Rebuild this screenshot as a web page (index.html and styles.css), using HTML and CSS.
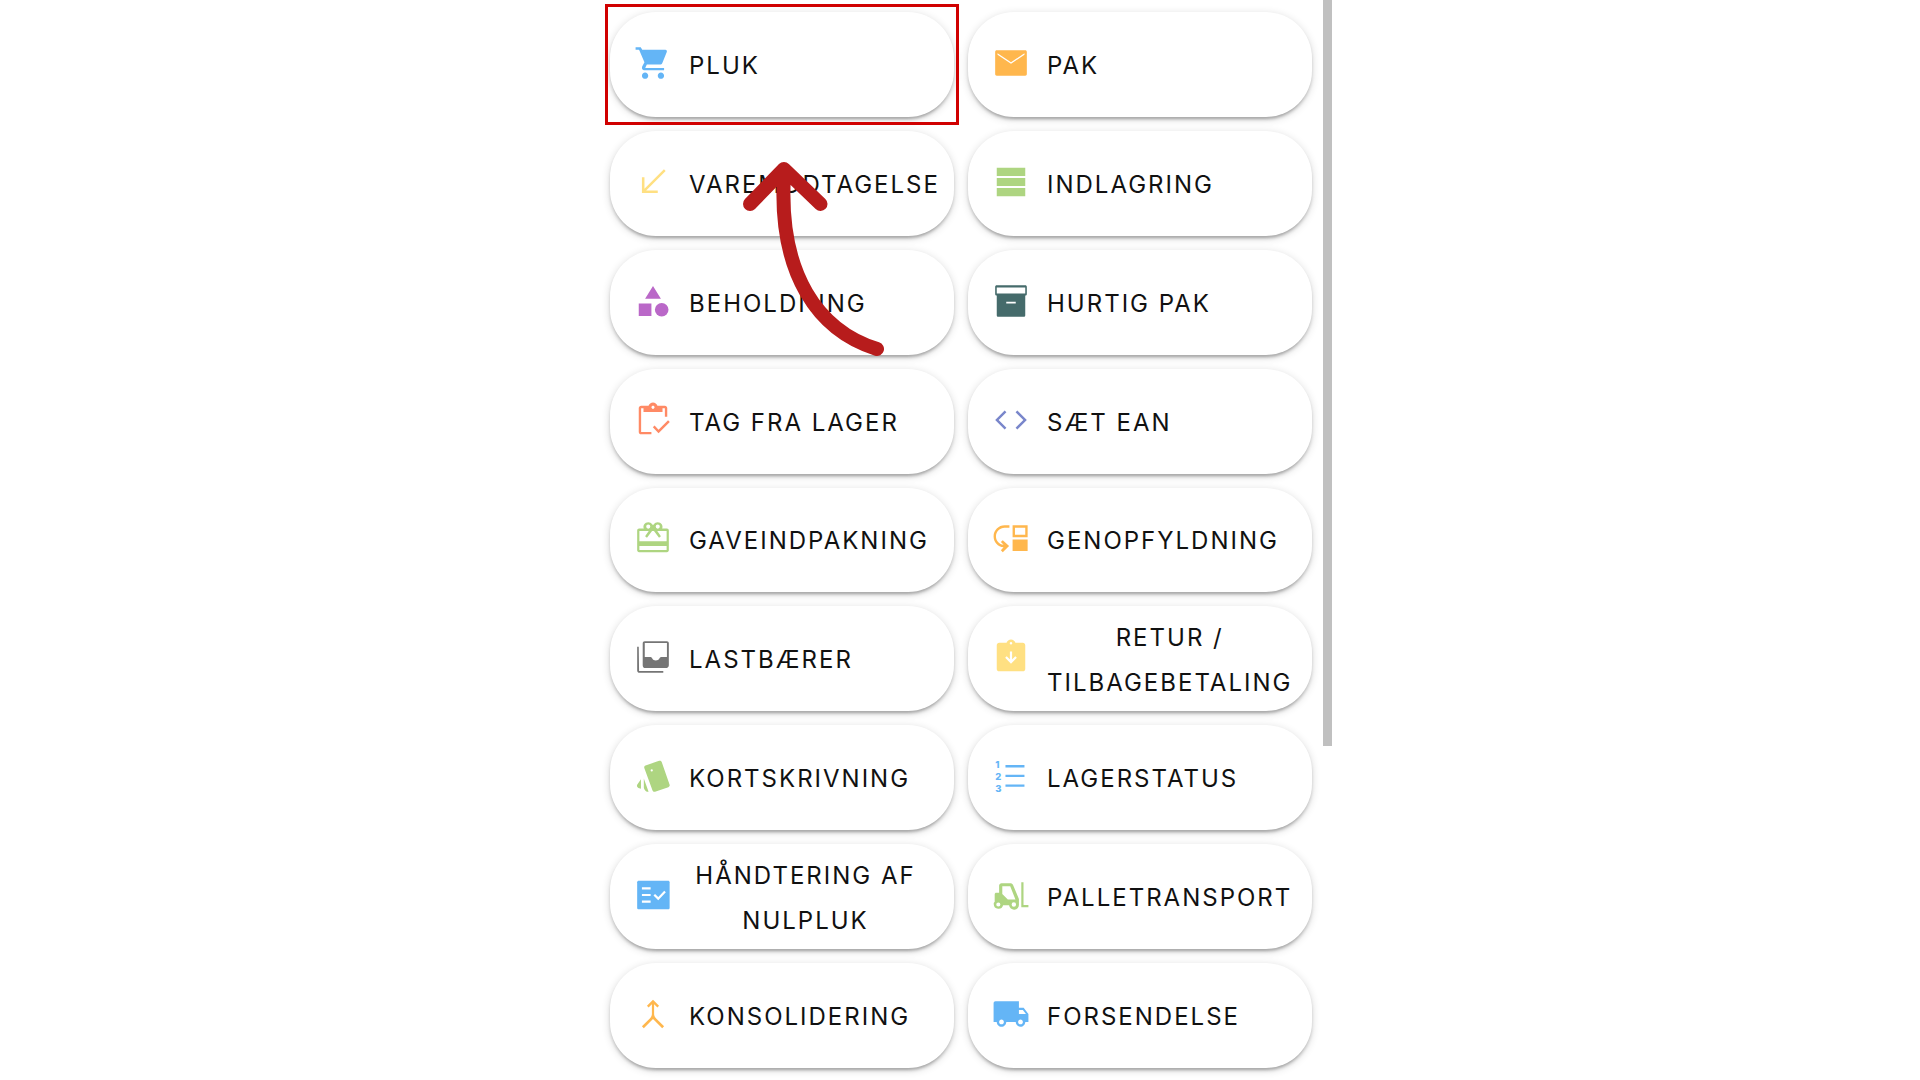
FILE: index.html
```
<!DOCTYPE html>
<html lang="da">
  <head>
    <meta charset="UTF-8" />
    <meta name="viewport" content="width=device-width, initial-scale=1.0" />
    <title>Lager</title>
    <link rel="stylesheet" href="styles.css">
  </head>
  <body>
    <div class="panel">
      <main class="menu">
        <button class="tile highlighted">
          <svg class="icon blue" viewBox="0 0 24 24"><path d="M7 18c-1.1 0-1.99.9-1.99 2S5.9 22 7 22s2-.9 2-2-.9-2-2-2zM1 2v1.600h2.200l3.400 7.990-1.350 2.450c-.16.28-.25.61-.25.96 0 1.100.9 1.600 2 1.600h12v-1.400H7.420c-.14 0-.25-.11-.25-.25l.03-.12.9-1.830h8.300c.75 0 1.200-.41 1.500-1.030l2.800-6.890c.3-.8-.1-1.480-.9-1.480H5.210l-.94-1.600H1zm16 16c-1.100 0-1.990.9-1.990 2s.89 2 1.990 2 2-.9 2-2-.9-2-2-2z"/></svg>
          <span>PLUK</span>
        </button>
        <button class="tile">
          <svg class="icon orange" viewBox="0 0 24 24"><path d="M21 4H3c-.6 0-1 .4-1 1v14c0 .6.4 1 1 1h18c.6 0 1-.4 1-1V5c0-.6-.4-1-1-1zm-.5 2.800L12 12.500 3.500 6.800V5.900L12 11.500l8.500-5.600z"/></svg>
          <span>PAK</span>
        </button>

        <button class="tile">
          <svg class="icon yellow" viewBox="0 0 24 24"><path d="M15 19v-1.600H7.700L20 5.100 18.900 4 6.600 16.300V9H5v10z"/></svg>
          <span>VAREMODTAGELSE</span>
        </button>
        <button class="tile">
          <svg class="icon green" viewBox="0 0 24 24"><path d="M3 3h18v5.200H3zM3 9.400h18v5.200H3zM3 15.800h18V21H3z"/></svg>
          <span>INDLAGRING</span>
        </button>

        <button class="tile">
          <svg class="icon purple" viewBox="0 0 24 24"><path d="M12 2.500l-5 8h10zM3 13.500h8v8H3z"/><circle cx="17.500" cy="17.500" r="4.300"/></svg>
          <span>BEHOLDNING</span>
        </button>
        <button class="tile">
          <svg class="icon teal" viewBox="0 0 24 24"><path fill-rule="evenodd" d="M3 2h18c.6 0 1 .4 1 1v4.500c0 .6-.4 1-1 1V21c0 .6-.4 1-1 1H4c-.6 0-1-.4-1-1V8.500c-.6 0-1-.4-1-1V3c0-.6.4-1 1-1zm0 1.400v3.800h18V3.400zm6 9v1.200h6v-1.200z"/></svg>
          <span>HURTIG PAK</span>
        </button>

        <button class="tile">
          <svg class="icon red" viewBox="0 0 24 24"><path d="M4.500 4.500H6V7h12V4.500h1.500V10H21V4.500c0-.8-.7-1.500-1.500-1.500h-4.700C14.400 1.840 13.300 1 12 1s-2.400.84-2.820 2H4.500C3.700 3 3 3.700 3 4.500v15c0 .8.7 1.500 1.500 1.500H11v-1.400H4.500zM12 3c.55 0 1 .45 1 1s-.45 1-1 1-1-.45-1-1 .45-1 1-1z"/><path d="M21.500 12.200L15.500 18.100l-2.500-2.600-1.100 1.100 3.600 3.700 7.100-7z"/></svg>
          <span>TAG FRA LAGER</span>
        </button>
        <button class="tile">
          <svg class="icon indigo" viewBox="0 0 24 24"><path d="M9.100 16.900L4.200 12l4.900-4.900L8 6l-6 6 6 6zm5.800 0l4.900-4.900-4.900-4.900L16 6l6 6-6 6z"/></svg>
          <span>SÆT EAN</span>
        </button>

        <button class="tile">
          <svg class="icon green" viewBox="0 0 24 24"><path fill-rule="evenodd" d="M20.800 6h-3c.8-2-.6-4-2.800-4-1.050 0-1.960.54-2.500 1.350l-.5.67-.5-.68C10.960 2.540 10.050 2 9 2 6.800 2 5.400 4 6.200 6h-3C2.500 6 2 6.500 2 7.200v12.600C2 20.500 2.500 21 3.200 21h17.600c.7 0 1.200-.5 1.200-1.200V7.200c0-.7-.5-1.200-1.200-1.200zM15 3.500a1.300 1.300 0 1 1 0 2.600 1.300 1.300 0 0 1 0-2.600zM9 3.500a1.300 1.300 0 1 1 0 2.600 1.300 1.300 0 0 1 0-2.600zM20.600 19.600H3.400V17h17.200zm0-5.600H3.400V7.500h5.900L7 10.830l1.200 1L11.400 7.500h1.200l3.200 4.330 1.200-1L14.700 7.500h5.900z"/></svg>
          <span>GAVEINDPAKNING</span>
        </button>
        <button class="tile">
          <svg class="icon orange" viewBox="0 0 24 24"><path d="M2.500 11c0 2.700 1.960 4.900 4.800 5.300l-1.700-1.800L6.800 13.400l4 3.700L6.800 21l-1.200-1.200 1.700-1.900C3.700 17.540 1 14.580 1 11c0-3.870 3.130-7 7-7h3v1.500H8c-3 0-5.500 2.500-5.500 5.500z"/><path d="M22.500 11.500V4h-9.500v7.500h9.500zM21 10h-6.500V5.500H21V10zM13 13h9.500v7.200H13z"/></svg>
          <span>GENOPFYLDNING</span>
        </button>

        <button class="tile">
          <svg class="icon gray" viewBox="0 0 24 24"><path d="M3 5.500H2V20.500c0 .8.7 1.500 1.500 1.500H18.500v-1.200H3.200z"/><path fill-rule="evenodd" d="M6.800 2h14c.7 0 1.200.5 1.200 1.200v14c0 1.100-.9 1.800-1.800 1.800H7.200c-1 0-1.700-.7-1.700-1.700v-14C5.500 2.500 6 2 6.800 2zM6.800 3.200V12h3.700c1 0 1 2.200 3.300 2.200s2.300-2.200 3.300-2.200H20.800V3.200z"/></svg>
          <span>LASTBÆRER</span>
        </button>
        <button class="tile">
          <svg class="icon yellow" viewBox="0 0 24 24"><path d="M19.500 3h-4.700C14.400 1.840 13.300 1 12 1c-1.300 0-2.400.84-2.820 2H4.500C3.700 3 3 3.700 3 4.500v15c0 .8.7 1.500 1.500 1.500h15c.8 0 1.500-.7 1.500-1.500v-15c0-.8-.7-1.500-1.500-1.500zM12 2.500c.4 0 .8.4.8.8s-.4.8-.8.8-.8-.4-.8-.8.4-.8.8-.8z"/><path class="mark" d="M12 8.500v6.500M8.800 12l3.200 3.200 3.200-3.200"/></svg>
          <span>RETUR / TILBAGEBETALING</span>
        </button>

        <button class="tile">
          <svg class="icon green" viewBox="0 0 24 24"><path fill-rule="evenodd" d="M7.300 5.300l8.600-2.900c.7-.2 1.300.1 1.600.8l5 14.300c.2.700-.1 1.300-.8 1.600l-8.400 2.800c-.7.200-1.300-.1-1.600-.8L6.500 6.900c-.2-.7.100-1.300.8-1.600zM11.200 7.800a.7.7 0 1 0 0 1.400.7.7 0 0 0 0-1.400z"/><path d="M6.200 13.500l3 8.500c-1.600.2-3-1.300-3-3zM4.400 14v6l-1.600-.5c-.8-.4-1.200-1.200-.8-2z"/></svg>
          <span>KORTSKRIVNING</span>
        </button>
        <button class="tile">
          <svg class="icon blue" viewBox="0 0 24 24"><path d="M8.500 5h12v1.700h-12zM8.500 11.200h12v1.500h-12zM8.500 17.300h12v1.500h-12z"/><text class="digit" x="2" y="7">1</text><text class="digit" x="2" y="14.500">2</text><text class="digit" x="2" y="22">3</text></svg>
          <span>LAGERSTATUS</span>
        </button>

        <button class="tile">
          <svg class="icon blue" viewBox="0 0 24 24"><path d="M21.500 3h-18.500c-.6 0-1 .4-1 1v16c0 .6.4 1 1 1h18.500c.6 0 1-.4 1-1V4c0-.6-.4-1-1-1z"/><path class="mark" d="M5 7.800h5.500M5 12h5.500M5 16.200h5.500M12.800 11.800l2.500 2.500 4.300-4.500"/></svg>
          <span>HÅNDTERING AF NULPLUK</span>
        </button>
        <button class="tile">
          <svg class="icon green" viewBox="0 0 24 24"><path fill-rule="evenodd" d="M6 4.500h5.500c.8 0 1.500.4 1.800 1.200L17 14.500v3.400a3 3 0 0 1-6.200.6H7a3 3 0 0 1-5.900-.6V17l.6-.8V11.500c0-.6.4-1 1-1h1.800V6c0-.8.7-1.500 1.500-1.500zm.5 1.900v5l3.500 3.400h4.800L11.500 6.400zM4 16.700a1.300 1.300 0 1 0 0 2.600 1.300 1.300 0 0 0 0-2.600zM13.800 16.600a1.400 1.400 0 1 0 0 2.800 1.400 1.400 0 0 0 0-2.800z"/><path d="M18.500 4h1.400v14.300H23v1.500h-4.500z"/></svg>
          <span>PALLETRANSPORT</span>
        </button>

        <button class="tile">
          <svg class="icon orange" viewBox="0 0 24 24"><path d="M6.200 21L5 19.800l5-4.900c.8-.8 1.300-1.770 1.300-2.830V5.800L9.200 7.900 8.200 6.800 12 3l3.800 3.800-1 1.100-2.100-2.100v6.270c0 1.060.5 2.030 1.300 2.830l5 4.900L17.800 21 12 15.200z"/></svg>
          <span>KONSOLIDERING</span>
        </button>
        <button class="tile">
          <svg class="icon blue" viewBox="0 0 24 24"><path d="M20 8h-3V4H2.200C1.500 4 1 4.500 1 5.200v11.800h2c0 1.660 1.340 3 3 3s3-1.340 3-3h6c0 1.660 1.340 3 3 3s3-1.340 3-3h2v-5l-3-4zM6 18.500c-.83 0-1.500-.67-1.500-1.500s.67-1.500 1.500-1.500 1.500.67 1.500 1.500-.67 1.500-1.500 1.500zm13.500-9l1.960 2.500H17V9.500h2.500zm-1.500 9c-.83 0-1.500-.67-1.500-1.500s.67-1.500 1.500-1.500 1.500.67 1.500 1.500-.67 1.500-1.500 1.500z"/></svg>
          <span>FORSENDELSE</span>
        </button>

        <svg class="arrow" viewBox="0 0 144 196"><path d="M134 188C76 170 35 114 41 14M7 43L41 8l36.500 35"/></svg>
      </main>
      <div class="scrollbar"></div>
    </div>
  </body>
</html>
```
FILE: styles.css
```
* {
  box-sizing: border-box;
}

body {
  margin: 0;
  background-color: #fff;
  font-family: Inter, sans-serif;
}

.panel {
  display: flex;
  gap: 11px;
  max-width: 744px;
  min-height: 100vh;
  margin: 0 auto;
  padding-left: 22px;
}

.menu {
  position: relative;
  flex: 1;
  display: grid;
  grid-template-columns: repeat(2, minmax(0, 1fr));
  grid-auto-rows: 1fr;
  gap: 14px;
  padding: 12px 0;
}

.tile {
  position: relative;
  display: flex;
  align-items: center;
  gap: 17px;
  padding: 2px 32px 0 24px;
  border: none;
  border-radius: 46px;
  background-color: #fff;
  box-shadow: 0 2px 8px rgba(0, 0, 0, 0.16), 0 3px 3px rgba(0, 0, 0, 0.14),
    0 5px 2px -3px rgba(0, 0, 0, 0.12);
  color: #111;
  font-family: inherit;
  font-size: 24px;
  line-height: 45px;
  letter-spacing: 2px;
  text-align: center;
  cursor: pointer;
}

/* red frame round the chosen tile */
.highlighted::after {
  content: "";
  position: absolute;
  inset: -8px -5px;
  border: 3px solid #d00000;
}

.icon {
  flex: none;
  width: 38px;
  height: 38px;
  margin-bottom: 5px;
  fill: currentColor;
}

.mark {
  fill: none;
  stroke: #fff;
  stroke-width: 1.4;
}

.digit {
  font-size: 6px;
  font-weight: 800;
  letter-spacing: 0;
}

.blue {
  color: #64b5f6;
}

.orange {
  color: #ffb74d;
}

.yellow {
  color: #ffe082;
}

.green {
  color: #aed581;
}

.purple {
  color: #ba68c8;
}

.teal {
  color: #456b6b;
}

.red {
  color: #ff8a65;
}

.indigo {
  color: #7986cb;
}

.gray {
  color: #757575;
}

.arrow {
  position: absolute;
  top: 161px;
  left: 133px;
  width: 144px;
  height: 196px;
  fill: none;
  stroke: #b71c1c;
  stroke-width: 14;
  stroke-linecap: round;
  stroke-linejoin: round;
  pointer-events: none;
}

.scrollbar {
  width: 9px;
  height: 746px;
  background-color: #c0c0c0;
}
```
